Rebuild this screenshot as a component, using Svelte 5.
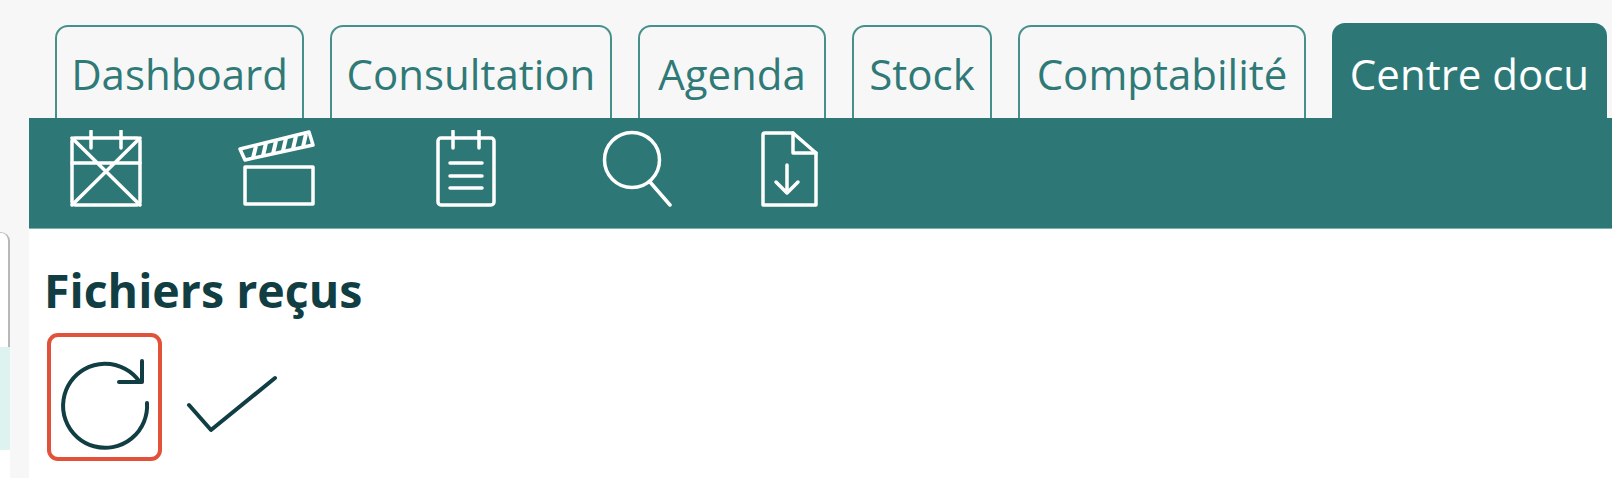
<script>
	let tabs = [
		{ label: 'Dashboard', width: 249 },
		{ label: 'Consultation', width: 282 },
		{ label: 'Agenda', width: 188 },
		{ label: 'Stock', width: 140 },
		{ label: 'Comptabilité', width: 288 },
		{ label: 'Centre docu', width: 275 }
	]
	let active = 'Centre docu'
</script>

<div class="page">
	<aside class="side">
		<div class="card">
			<div class="card-head"></div>
			<div class="card-row"></div>
		</div>
	</aside>

	<main class="main">
		<nav class="tabs">
			{#each tabs as tab}
				<div class="tab" class:active={tab.label === active} style="width:{tab.width}px">{tab.label}</div>
			{/each}
		</nav>

		<div class="toolbar">
			<svg class="ic" width="72" height="77" viewBox="70 130 72 77">
				<rect x="72" y="138" width="68" height="67" rx="3" />
				<path d="M91 131V148M121 131V148M72 163H140M72 138L140 205M140 138L72 205" />
			</svg>
			<svg class="ic clap" width="78" height="77" viewBox="238 130 78 77">
				<rect x="245" y="167" width="68" height="37" />
				<path d="M240 149L309 132L313 145L245 160Z" />
				<path class="stripes" d="M253 158L256 146M263 156L266 143M273 154L276 141M283 151L286 138M293 149L296 136M303 147L306 134" />
			</svg>
			<svg class="ic note" width="60" height="77" viewBox="436 130 60 77">
				<rect x="438" y="138" width="56" height="67" rx="3" />
				<path d="M453 131V148M479 131V148M450 163H482M450 176H482M450 188H482" />
			</svg>
			<svg class="ic search" width="70" height="77" viewBox="602 130 70 77">
				<circle cx="632" cy="160" r="27.500" />
				<path d="M650 182L670 205" />
			</svg>
			<svg class="ic file" width="57" height="77" viewBox="761 130 57 77">
				<path d="M765 133H793L816 153V205H763V135Q763 133 765 133Z" />
				<path d="M793 133V153H816M787 165V193M776 182L787 193L798 182" />
			</svg>
		</div>

		<section class="content">
			<h1>Fichiers reçus</h1>
			<div class="actions">
				<button class="btn selected" aria-label="Rafraîchir">
					<svg class="dark" width="92" height="108" viewBox="59 343 92 108">
						<path d="M147 403A42 42 0 1 1 139 381" />
						<path d="M119 382H142V361" />
					</svg>
				</button>
				<button class="btn check" aria-label="Valider">
					<svg class="dark" width="92" height="102" viewBox="186 346 92 102">
						<path d="M189 405L211 430L275 378" />
					</svg>
				</button>
			</div>
		</section>
	</main>
</div>

<style>
	:global(body) {
		margin: 0;
		background: #f7f7f7;
	}

	.page {
		display: flex;
		height: 478px;
		overflow: hidden;
		font-family: "Open Sans", "Noto Sans", sans-serif;
	}

	.side {
		width: 29px;
		flex: none;
		padding-top: 232px;
		box-sizing: border-box;
	}

	.card {
		width: 10px;
		height: 246px;
		background: #fff;
		border-top-right-radius: 9px;
	}

	.card-head {
		height: 115px;
		box-sizing: border-box;
		border-top: 1px solid #c4c4c4;
		border-right: 2px solid #b8b8b8;
		border-top-right-radius: 9px;
	}

	.card-row {
		height: 103px;
		background: #def2f0;
	}

	.main {
		flex: 1;
		min-width: 0;
		display: flex;
		flex-direction: column;
	}

	.tabs {
		height: 118px;
		flex: none;
		display: flex;
		align-items: flex-end;
		gap: 26px;
		padding-left: 26px;
		box-sizing: border-box;
	}

	.tab {
		height: 93px;
		flex: none;
		box-sizing: border-box;
		border: 2px solid #46908c;
		border-bottom: 0;
		border-radius: 13px 13px 0 0;
		color: #2f7a77;
		font-size: 42px;
		line-height: 94px;
		text-align: center;
		white-space: nowrap;
	}

	.tab.active {
		height: 95px;
		background: #2d7876;
		border-color: #2d7876;
		color: #fff;
		line-height: 98px;
	}

	.toolbar {
		height: 111px;
		flex: none;
		box-sizing: border-box;
		background: #2d7876;
		border-bottom: 1px solid #7fb0ad;
		padding: 12px 0 0 41px;
		display: flex;
		align-items: flex-start;
	}

	.ic {
		flex: none;
		fill: none;
		stroke: #fff;
		stroke-width: 3.5;
		stroke-linecap: round;
		stroke-linejoin: round;
	}

	.stripes {
		stroke-width: 4;
		stroke-linecap: butt;
	}

	.clap { margin-left: 96px; }
	.note { margin-left: 120px; }
	.search { margin-left: 106px; }
	.file { margin-left: 89px; }

	.content {
		flex: 1;
		background: #fff;
		padding: 0 0 0 15px;
	}

	h1 {
		margin: 0;
		padding-top: 30px;
		font-size: 46.5px;
		line-height: 62px;
		font-weight: 700;
		color: #113e43;
	}

	.actions {
		display: flex;
		align-items: flex-start;
		margin-top: 12px;
		padding-left: 3px;
	}

	.btn {
		width: 115px;
		height: 128px;
		flex: none;
		box-sizing: border-box;
		padding: 0;
		background: none;
		border: 4px solid transparent;
		border-radius: 11px;
		display: flex;
		align-items: center;
		justify-content: center;
	}

	.btn.selected {
		border-color: #e2513a;
	}

	.btn.check {
		margin-left: 12px;
	}

	.dark {
		flex: none;
		fill: none;
		stroke: #113e43;
		stroke-width: 4;
		stroke-linecap: round;
		stroke-linejoin: round;
	}
</style>
